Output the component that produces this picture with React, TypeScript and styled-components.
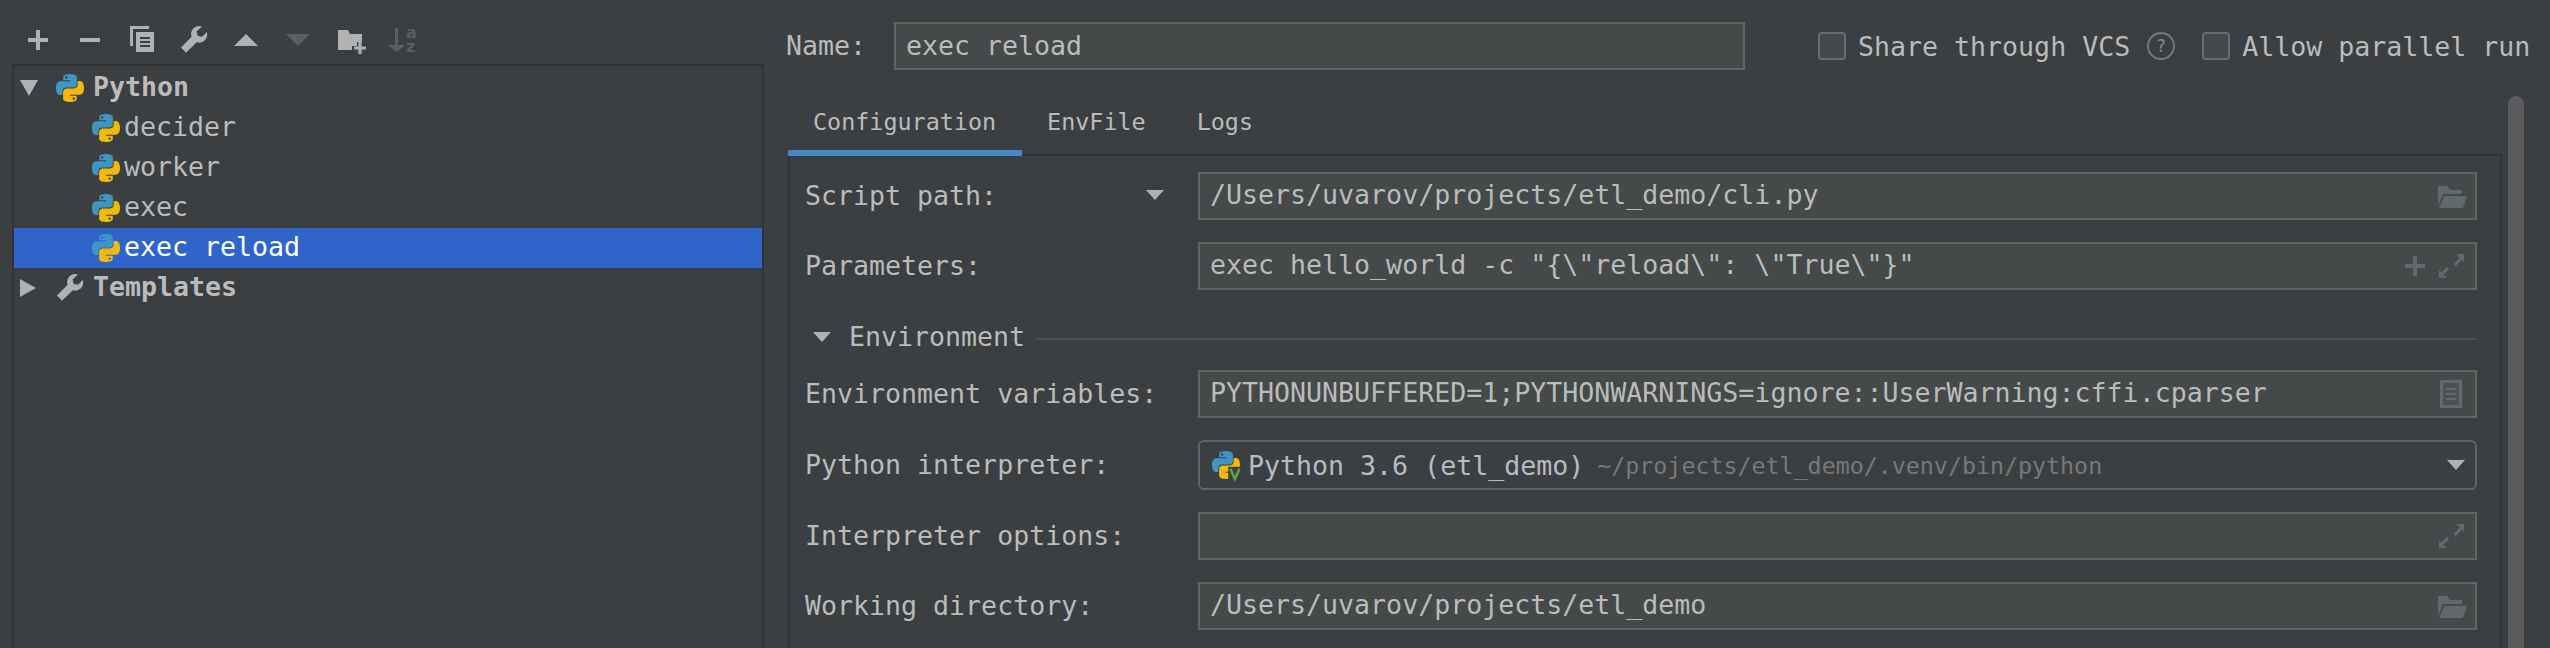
import React from "react";
import styled, { createGlobalStyle } from "styled-components";

const bg = "#3c3f41";
const text = "#bbbbbb";
const line = "#323232";
const fieldBorder = "#646464";
const fieldBg = "#45494a";
const iconOn = "#afb1b3";
const iconOff = "#5c5e5f";
const iconField = "#5f696e";

const GlobalStyle = createGlobalStyle`
  html, body {
    margin: 0;
    padding: 0;
    background: ${bg};
  }
  * {
    box-sizing: border-box;
  }
`;

const Page = styled.div`
  display: flex;
  width: 2550px;
  height: 648px;
  overflow: hidden;
  background: ${bg};
  color: ${text};
  font-family: "DejaVu Sans Mono", "Liberation Mono", monospace;
  font-size: 26.6px;
`;

const Sidebar = styled.div`
  display: flex;
  flex-direction: column;
  width: 764px;
  flex-shrink: 0;
  padding-left: 12px;
`;

const Toolbar = styled.div`
  display: flex;
  gap: 20px;
  height: 64px;
  padding: 24px 0 0 10px;
`;

const ToolIcon = styled.svg<{ $off?: boolean }>`
  width: 32px;
  height: 32px;
  flex-shrink: 0;
  fill: ${(p) => (p.$off ? iconOff : iconOn)};
`;

const TreeWrench = styled(ToolIcon)`
  margin: 0 -2px;
`;

const Tree = styled.div`
  flex: 1;
  padding-top: 2px;
  border: 2px solid ${line};
  border-bottom: none;
`;

const TreeRow = styled.div<{ $selected?: boolean; $child?: boolean; $bold?: boolean }>`
  display: flex;
  align-items: center;
  height: 40px;
  padding-left: ${(p) => (p.$child ? "78px" : "6px")};
  gap: ${(p) => (p.$child ? "4px" : "9px")};
  background: ${(p) => (p.$selected ? "#2f65ca" : "transparent")};
  color: ${(p) => (p.$selected ? "#ffffff" : text)};
  font-weight: ${(p) => (p.$bold ? 700 : 400)};
`;

const TreeLabel = styled.span`
  margin-top: -3px;
`;

const Expander = styled.svg`
  width: 18px;
  height: 18px;
  margin-right: 9px;
  fill: ${iconOn};
`;

const Main = styled.div`
  flex: 1;
  padding: 22px 0 0 22px;
  min-width: 0;
`;

const NameRow = styled.div`
  display: flex;
  align-items: center;
  height: 48px;
`;

const NameLabel = styled.div`
  width: 108px;
  padding-bottom: 2px;
`;

const NameField = styled.div`
  display: flex;
  align-items: center;
  width: 851px;
  height: 48px;
  padding: 0 0 2px 10px;
  background: ${fieldBg};
  border: 2px solid ${fieldBorder};
`;

const CheckItem = styled.div<{ $gap: number }>`
  display: flex;
  align-items: center;
  gap: 12px;
  margin-left: ${(p) => p.$gap}px;
  white-space: nowrap;
`;

const CheckBox = styled.span`
  width: 28px;
  height: 28px;
  border: 2px solid #6b6b6b;
  border-radius: 4px;
  background: #43494a;
`;

const Help = styled.span`
  display: flex;
  align-items: center;
  justify-content: center;
  width: 28px;
  height: 28px;
  margin-left: 17px;
  border: 2px solid #6e7a82;
  border-radius: 50%;
  color: #7f8b91;
  font-family: "DejaVu Sans", sans-serif;
  font-size: 17px;
`;

const Body = styled.div`
  display: flex;
  align-items: flex-start;
  height: 558px;
  margin-top: 26px;
  margin-left: 2px;
`;

const TabArea = styled.div`
  display: flex;
  flex-direction: column;
  width: 1714px;
  height: 100%;
`;

const TabStrip = styled.div`
  display: flex;
  height: 60px;
  flex-shrink: 0;
  border-bottom: 2px solid ${line};
`;

const Tab = styled.div<{ $active?: boolean }>`
  display: flex;
  align-items: center;
  height: 60px;
  padding: 0 26px 2px 25px;
  font-size: 23.4px;
  border-bottom: 6px solid ${(p) => (p.$active ? "#4a88c7" : "transparent")};
`;

const Panel = styled.div`
  display: flex;
  flex-direction: column;
  flex: 1;
  padding: 16px 23px 0 15px;
  border-left: 2px solid ${line};
  border-right: 2px solid ${line};
`;

const FormRow = styled.div`
  display: grid;
  grid-template-columns: 393px 1fr;
  align-items: center;
  margin-bottom: 22px;
`;

const RowLabel = styled.div`
  display: flex;
  align-items: center;
  justify-content: space-between;
  padding-right: 34px;
  padding-bottom: 2px;
  white-space: nowrap;
`;

const Field = styled.div`
  display: flex;
  align-items: center;
  justify-content: space-between;
  height: 48px;
  padding: 0 8px 0 10px;
  background: ${fieldBg};
  border: 2px solid ${fieldBorder};
  white-space: nowrap;
`;

const FieldValue = styled.span`
  margin-top: -3px;
`;

const Combo = styled(Field)`
  height: 50px;
  padding: 0 10px 0 12px;
  background: transparent;
  border-radius: 6px;
`;

const ComboValue = styled.div`
  display: flex;
  align-items: center;
  gap: 8px;
`;

const Hint = styled.span`
  margin-left: 5px;
  color: #787878;
  font-size: 23.3px;
`;

const FieldIcons = styled.div`
  display: flex;
  gap: 4px;
`;

const FieldIcon = styled.svg`
  width: 32px;
  height: 32px;
  flex-shrink: 0;
  fill: ${iconField};
`;

const Arrow = styled.svg`
  width: 18px;
  height: 10px;
  flex-shrink: 0;
  fill: ${iconOn};
`;

const SectionHeader = styled.div`
  display: flex;
  align-items: center;
  height: 36px;
  margin: 7px 0 15px;
  padding-left: 8px;
  gap: 18px;
`;

const SectionTitle = styled.span`
  margin-top: -2px;
`;

const SectionRule = styled.div`
  flex: 1;
  height: 2px;
  margin: 4px 0 0 -7px;
  background: #4e5052;
`;

const Scrollbar = styled.div`
  width: 16px;
  height: 100%;
  margin: 0 0 0 6px;
  background: #595b5d;
  border-radius: 8px 8px 0 0;
`;

function PythonLogo({ size = 28, venv = false }: { size?: number; venv?: boolean }) {
  const snake =
    "M54.9 0C26.8 0 28.6 12.2 28.6 12.2v12.6h26.8v3.8H17.9S0 26.5 0 54.8s15.7 27.3 15.7 27.3h9.3V69s-.5-15.6 15.4-15.6h26.7s14.9.2 14.9-14.4V14.8S84.5 0 54.9 0zM40.1 8.5a4.8 4.8 0 1 1 0 9.6 4.8 4.8 0 0 1 0-9.6z";
  return (
    <svg width={size} height={size} viewBox="0 0 110 110" style={{ flexShrink: 0, overflow: "visible" }}>
      <path d={snake} fill="#3d97c6" fillRule="evenodd" />
      <path d={snake} fill="#f2b90c" fillRule="evenodd" transform="rotate(180 55 55)" />
      {venv && (
        <>
          <rect x="64" y="62" width="54" height="52" fill="#3c3f41" />
          <path d="M72 70l18 40 18-40" fill="none" stroke="#59a83f" strokeWidth="10" />
        </>
      )}
    </svg>
  );
}

const wrench =
  "M10.5 1a4 4 0 0 0-3.7 5.4L1.5 11.8 4 14.4l5.4-5.3a4 4 0 0 0 5-5.1l-2.4 2.4-2.2-.5-.5-2.2L12 1.3A4 4 0 0 0 10.5 1z";

function ActionBar() {
  return (
    <Toolbar>
      <ToolIcon viewBox="0 0 16 16">
        <path d="M7 3h2v4h4v2H9v4H7V9H3V7h4z" />
      </ToolIcon>
      <ToolIcon viewBox="0 0 16 16">
        <path d="M3 7h10v2H3z" />
      </ToolIcon>
      <ToolIcon viewBox="0 0 16 16">
        <path d="M2 1h9.500v1.500H3.500V11H2z" />
        <path
          fillRule="evenodd"
          d="M5 4h9v10H5zM7 6.500h5v1H7zM7 8.500h5v1H7zM7 10.500h5v1H7z"
        />
      </ToolIcon>
      <ToolIcon viewBox="0 0 16 16">
        <path d={wrench} />
      </ToolIcon>
      <ToolIcon viewBox="0 0 16 16">
        <path d="M8 5l6 6H2z" />
      </ToolIcon>
      <ToolIcon viewBox="0 0 16 16" $off>
        <path d="M2 5h12l-6 6z" />
      </ToolIcon>
      <ToolIcon viewBox="0 0 16 16">
        <path d="M2 3h5l1 2h6v4h-2.500v2H9v2H2z" />
        <path d="M12.200 9h1.600v2.200H16v1.600h-2.200V15h-1.600v-2.200H10v-1.600h2.200z" />
      </ToolIcon>
      <ToolIcon viewBox="0 0 16 16" $off>
        <path d="M4.500 2H6v8.500h3.500L5.250 14 1 10.500h3.500z" />
        <text x="10" y="7" fontSize="8" fontWeight="700" fontFamily="DejaVu Sans, sans-serif">a</text>
        <text x="10" y="14" fontSize="8" fontWeight="700" fontFamily="DejaVu Sans, sans-serif">z</text>
      </ToolIcon>
    </Toolbar>
  );
}

function ConfigTree() {
  return (
    <Tree>
      <TreeRow $bold>
        <Expander viewBox="0 0 18 18">
          <path d="M0 1h18L9 17z" />
        </Expander>
        <PythonLogo />
        <TreeLabel>Python</TreeLabel>
      </TreeRow>
      <TreeRow $child>
        <PythonLogo />
        <TreeLabel>decider</TreeLabel>
      </TreeRow>
      <TreeRow $child>
        <PythonLogo />
        <TreeLabel>worker</TreeLabel>
      </TreeRow>
      <TreeRow $child>
        <PythonLogo />
        <TreeLabel>exec</TreeLabel>
      </TreeRow>
      <TreeRow $child $selected>
        <PythonLogo />
        <TreeLabel>exec reload</TreeLabel>
      </TreeRow>
      <TreeRow $bold>
        <Expander viewBox="0 0 18 18">
          <path d="M0 0l16 9-16 9z" />
        </Expander>
        <TreeWrench viewBox="0 0 16 16">
          <path d={wrench} />
        </TreeWrench>
        <TreeLabel>Templates</TreeLabel>
      </TreeRow>
    </Tree>
  );
}

function FolderIcon() {
  return (
    <FieldIcon viewBox="0 0 16 16">
      <path d="M1.500 3H6l1.500 2h6v2H4l-2.500 6z" />
      <path d="M4.500 8H16l-2 6H2z" />
    </FieldIcon>
  );
}

function ExpandIcon() {
  return (
    <FieldIcon viewBox="0 0 16 16">
      <path d="M10.500 2h4v4zM2 10l4 4H2z" />
      <path d="M12.800 4l-3 3 .5.500 3-3zM6 9l-3 3 .5.500 3-3z" stroke={iconField} strokeWidth=".8" />
    </FieldIcon>
  );
}

function DownArrow() {
  return (
    <Arrow viewBox="0 0 18 10">
      <path d="M0 0h18L9 10z" />
    </Arrow>
  );
}

export default function App() {
  return (
    <Page>
      <GlobalStyle />
      <Sidebar>
        <ActionBar />
        <ConfigTree />
      </Sidebar>
      <Main>
        <NameRow>
          <NameLabel>Name:</NameLabel>
          <NameField>exec reload</NameField>
          <CheckItem $gap={73}>
            <CheckBox />
            Share through VCS
          </CheckItem>
          <Help>?</Help>
          <CheckItem $gap={27}>
            <CheckBox />
            Allow parallel run
          </CheckItem>
        </NameRow>
        <Body>
          <TabArea>
            <TabStrip>
              <Tab $active>Configuration</Tab>
              <Tab>EnvFile</Tab>
              <Tab>Logs</Tab>
            </TabStrip>
            <Panel>
              <FormRow>
                <RowLabel>
                  Script path:
                  <DownArrow />
                </RowLabel>
                <Field>
                  <FieldValue>/Users/uvarov/projects/etl_demo/cli.py</FieldValue>
                  <FolderIcon />
                </Field>
              </FormRow>
              <FormRow>
                <RowLabel>Parameters:</RowLabel>
                <Field>
                  <FieldValue>{'exec hello_world -c "{\\"reload\\": \\"True\\"}"'}</FieldValue>
                  <FieldIcons>
                    <FieldIcon viewBox="0 0 16 16">
                      <path d="M7 3h2v4h4v2H9v4H7V9H3V7h4z" />
                    </FieldIcon>
                    <ExpandIcon />
                  </FieldIcons>
                </Field>
              </FormRow>
              <SectionHeader>
                <DownArrow />
                <SectionTitle>Environment</SectionTitle>
                <SectionRule />
              </SectionHeader>
              <FormRow>
                <RowLabel>Environment variables:</RowLabel>
                <Field>
                  <FieldValue>PYTHONUNBUFFERED=1;PYTHONWARNINGS=ignore::UserWarning:cffi.cparser</FieldValue>
                  <FieldIcon viewBox="0 0 16 16">
                    <path d="M2.500 1h11v14h-11z" />
                    <path d="M4 2.500h8v11H4z" fill="#4c5254" />
                    <path d="M5.500 5h5v1h-5zM5.500 7.500h5v1h-5zM5.500 10h5v1h-5z" />
                  </FieldIcon>
                </Field>
              </FormRow>
              <FormRow>
                <RowLabel>Python interpreter:</RowLabel>
                <Combo>
                  <ComboValue>
                    <PythonLogo venv />
                    <span>Python 3.6 (etl_demo)</span>
                    <Hint>~/projects/etl_demo/.venv/bin/python</Hint>
                  </ComboValue>
                  <DownArrow />
                </Combo>
              </FormRow>
              <FormRow>
                <RowLabel>Interpreter options:</RowLabel>
                <Field>
                  <span />
                  <ExpandIcon />
                </Field>
              </FormRow>
              <FormRow>
                <RowLabel>Working directory:</RowLabel>
                <Field>
                  <FieldValue>/Users/uvarov/projects/etl_demo</FieldValue>
                  <FolderIcon />
                </Field>
              </FormRow>
            </Panel>
          </TabArea>
          <Scrollbar />
        </Body>
      </Main>
    </Page>
  );
}
